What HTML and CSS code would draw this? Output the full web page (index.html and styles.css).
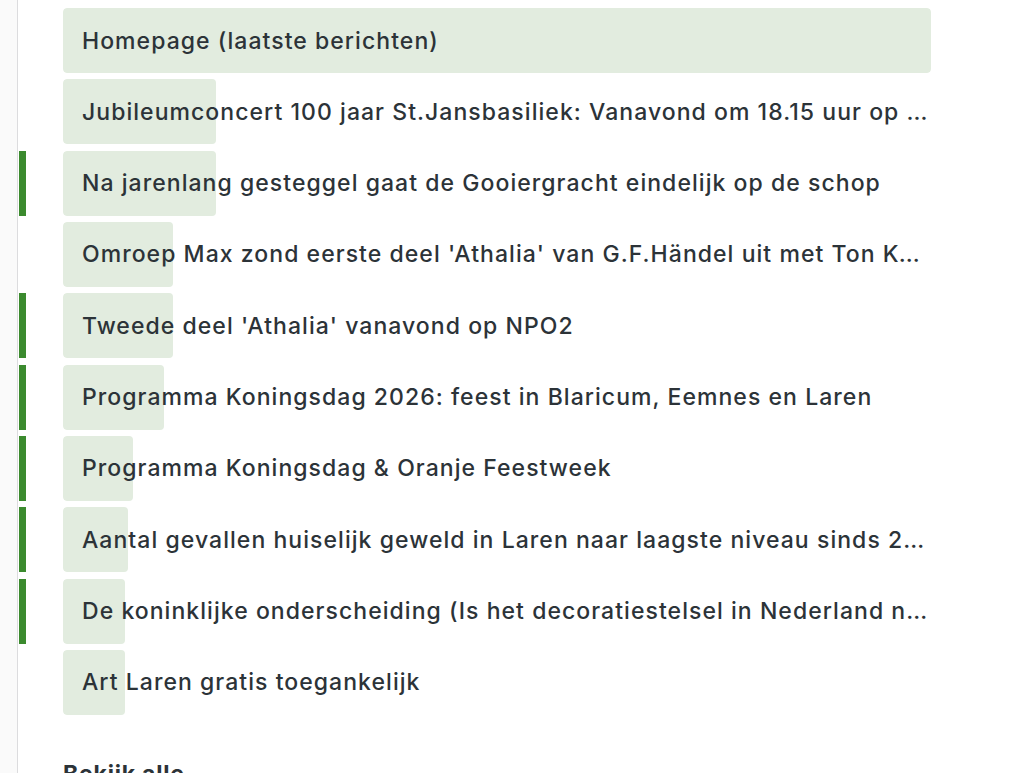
FILE: index.html
```html
<!DOCTYPE html>
<html lang="nl">
<head>
<meta charset="utf-8">
<title>Berichten</title>
<link rel="stylesheet" href="styles.css">
</head>
<body>
<div class="page">
  <aside class="rail"></aside>
  <main class="main">
    <ul class="list">
      <li class="row"><span class="marker"></span><a class="item"><span class="fill" style="width:100%"></span><span class="label">Homepage (laatste berichten)</span></a></li>
      <li class="row"><span class="marker"></span><a class="item"><span class="fill" style="width:153px"></span><span class="label">Jubileumconcert 100 jaar St.Jansbasiliek: Vanavond om 18.15 uur op NPO2 de uitzending</span></a></li>
      <li class="row"><span class="marker on"></span><a class="item"><span class="fill" style="width:153px"></span><span class="label">Na jarenlang gesteggel gaat de Gooiergracht eindelijk op de schop</span></a></li>
      <li class="row"><span class="marker"></span><a class="item"><span class="fill" style="width:110px"></span><span class="label">Omroep Max zond eerste deel 'Athalia' van G.F.Händel uit met Ton Koopman</span></a></li>
      <li class="row"><span class="marker on"></span><a class="item"><span class="fill" style="width:110px"></span><span class="label">Tweede deel 'Athalia' vanavond op NPO2</span></a></li>
      <li class="row"><span class="marker on"></span><a class="item"><span class="fill" style="width:101px"></span><span class="label">Programma Koningsdag 2026: feest in Blaricum, Eemnes en Laren</span></a></li>
      <li class="row"><span class="marker on"></span><a class="item"><span class="fill" style="width:70px"></span><span class="label">Programma Koningsdag &amp; Oranje Feestweek</span></a></li>
      <li class="row"><span class="marker on"></span><a class="item"><span class="fill" style="width:65px"></span><span class="label">Aantal gevallen huiselijk geweld in Laren naar laagste niveau sinds 2015</span></a></li>
      <li class="row"><span class="marker on"></span><a class="item"><span class="fill" style="width:62px"></span><span class="label">De koninklijke onderscheiding (Is het decoratiestelsel in Nederland nog van deze tijd?)</span></a></li>
      <li class="row"><span class="marker"></span><a class="item"><span class="fill" style="width:62px"></span><span class="label">Art Laren gratis toegankelijk</span></a></li>
    </ul>
    <h2 class="more">Bekijk alle</h2>
  </main>
</div>
</body>
</html>
```
FILE: styles.css
```css
html, body {
  margin: 0;
  padding: 0;
  background: #ffffff;
  height: 100%;
  overflow: hidden;
}
body {
  font-family: Inter, "Noto Sans", "DejaVu Sans", sans-serif;
  color: #2c3338;
}
.page {
  display: flex;
  min-height: 100vh;
}
.rail {
  width: 17px;
  flex: 0 0 17px;
  background: #fafafa;
  border-right: 1px solid #dcdcde;
}
.main {
  flex: 1;
  padding-top: 8px;
}
.list {
  list-style: none;
  margin: 0;
  padding: 0;
  display: flex;
  flex-direction: column;
  gap: 6.33px;
}
.row {
  display: flex;
  align-items: stretch;
  height: 65px;
}
.marker {
  width: 7px;
  margin-left: 1px;
  margin-right: 37px;
  flex: 0 0 7px;
}
.marker.on {
  background: #3b8a2e;
}
.item {
  position: relative;
  width: 868px;
  display: flex;
  align-items: center;
  padding: 0 1px 0 19px;
  box-sizing: border-box;
  border-radius: 4px;
  overflow: hidden;
  text-decoration: none;
  color: inherit;
}
.fill {
  position: absolute;
  left: 0;
  top: 0;
  bottom: 0;
  background: #e2ecdf;
  border-radius: 4px;
}
.label {
  position: relative;
  font-size: 23px;
  font-weight: 500;
  line-height: 30px;
  white-space: nowrap;
  overflow: hidden;
  text-overflow: ellipsis;
  letter-spacing: 1.05px;
}
.more {
  margin: 44px 0 0 45px;
  font-size: 23px;
  font-weight: 700;
  line-height: 30px;
  letter-spacing: 0.8px;
}
```
